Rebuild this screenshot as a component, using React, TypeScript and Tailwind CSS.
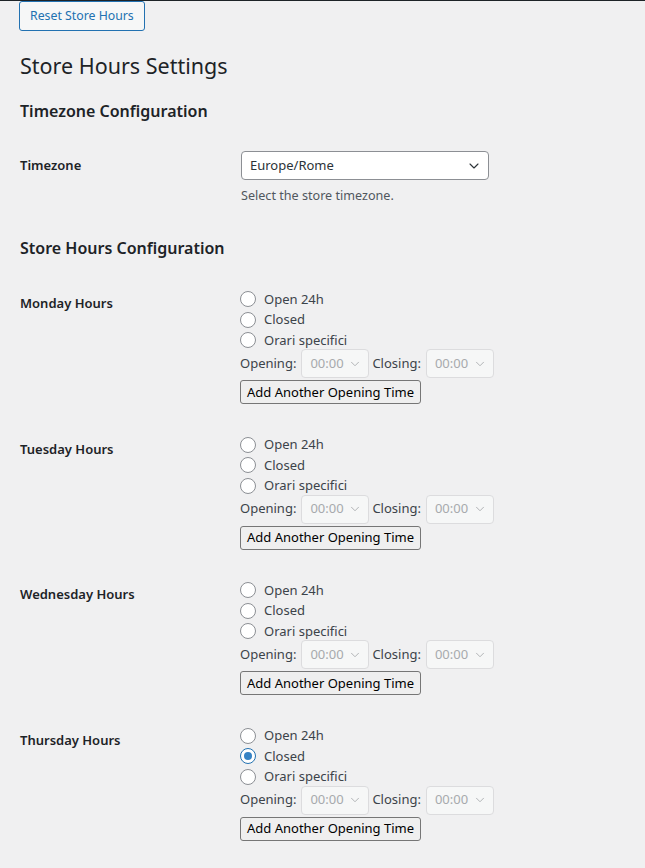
import { ChevronDown } from 'lucide-react'

type Choice = 'open' | 'closed' | 'custom' | null

const days: { name: string; checked: Choice }[] = [
    { name: 'Monday', checked: null },
    { name: 'Tuesday', checked: null },
    { name: 'Wednesday', checked: null },
    { name: 'Thursday', checked: 'closed' },
]

const font = { fontFamily: '"Noto Sans", "Open Sans", Arial, sans-serif' }

function Radio({ label, checked }: { label: string; checked: boolean }) {
    return (
        <label className="flex items-center h-[20.5px] gap-2 text-[13px] text-[#3c434a]">
            <span
                className={`w-4 h-4 rounded-full border bg-white flex items-center justify-center ${checked ? 'border-[#2271b1]' : 'border-[#8c8f94]'}`}
            >
                {checked && <span className="w-2 h-2 rounded-full bg-[#3582c4]" />}
            </span>
            <span>{label}</span>
        </label>
    )
}

function TimeSelect() {
    return (
        <div className="w-[68px] h-[29px] rounded-[4px] border border-[#dcdcde] bg-[#f6f7f7] flex items-center justify-between pl-[8px] pr-[6px] text-[13px] text-[#a7aaad]">
            <span>00:00</span>
            <ChevronDown size={14} strokeWidth={1.5} />
        </div>
    )
}

function DayRow({ name, checked }: { name: string; checked: Choice }) {
    return (
        <div className="flex h-[145.5px]">
            <div className="w-[220px] pt-[18px] leading-5 text-[13px] font-semibold text-[#1d2327]">{name} Hours</div>
            <div className="pt-[14px] flex flex-col">
                <Radio label="Open 24h" checked={checked === 'open'} />
                <Radio label="Closed" checked={checked === 'closed'} />
                <Radio label="Orari specifici" checked={checked === 'custom'} />
                <div className="flex items-center h-[29px] text-[13px] text-[#3c434a] -mt-[1.5px]">
                    <span>Opening:</span>
                    <span className="ml-[5px] mr-[3px]">
                        <TimeSelect />
                    </span>
                    <span>Closing:</span>
                    <span className="ml-[5px]">
                        <TimeSelect />
                    </span>
                </div>
                <div className="flex mt-[2px]">
                    <button className="h-6 px-[6px] rounded-[3px] border border-[#767676] bg-[#efefef] text-[13px] text-black leading-none">
                        Add Another Opening Time
                    </button>
                </div>
            </div>
        </div>
    )
}

export default function App() {
    return (
        <div className="min-h-screen bg-[#f0f0f1] border-t border-[#1d2327]" style={font}>
            <div className="pl-5">
                <button className="h-[30px] -ml-px px-[10px] rounded-[3px] border border-[#2271b1] bg-[#f6f7f7] text-[12.3px] text-[#2271b1]">
                    Reset Store Hours
                </button>

                <h1 className="mt-[20px] text-[21.5px] leading-[30px] font-normal text-[#1d2327]">Store Hours Settings</h1>

                <h2 className="mt-[19px] text-[16px] leading-[22px] font-semibold text-[#1d2327]">Timezone Configuration</h2>

                <div className="flex mt-[29px]">
                    <div className="w-[221px] leading-[29px] text-[13px] font-semibold text-[#1d2327]">Timezone</div>
                    <div>
                        <div className="w-[248px] h-[29px] rounded-[4px] border border-[#8c8f94] bg-white flex items-center justify-between pl-[8px] pr-[6px] text-[13px] text-[#2c3338]">
                            <span>Europe/Rome</span>
                            <ChevronDown size={16} strokeWidth={1.6} />
                        </div>
                        <p className="mt-[6px] leading-5 text-[12.6px] text-[#50575e]">Select the store timezone.</p>
                    </div>
                </div>

                <h2 className="mt-[31px] text-[16px] leading-[22px] font-semibold text-[#1d2327]">Store Hours Configuration</h2>

                <div className="mt-[16px]">
                    {days.map((d) => (
                        <DayRow key={d.name} name={d.name} checked={d.checked} />
                    ))}
                </div>
            </div>
        </div>
    )
}
